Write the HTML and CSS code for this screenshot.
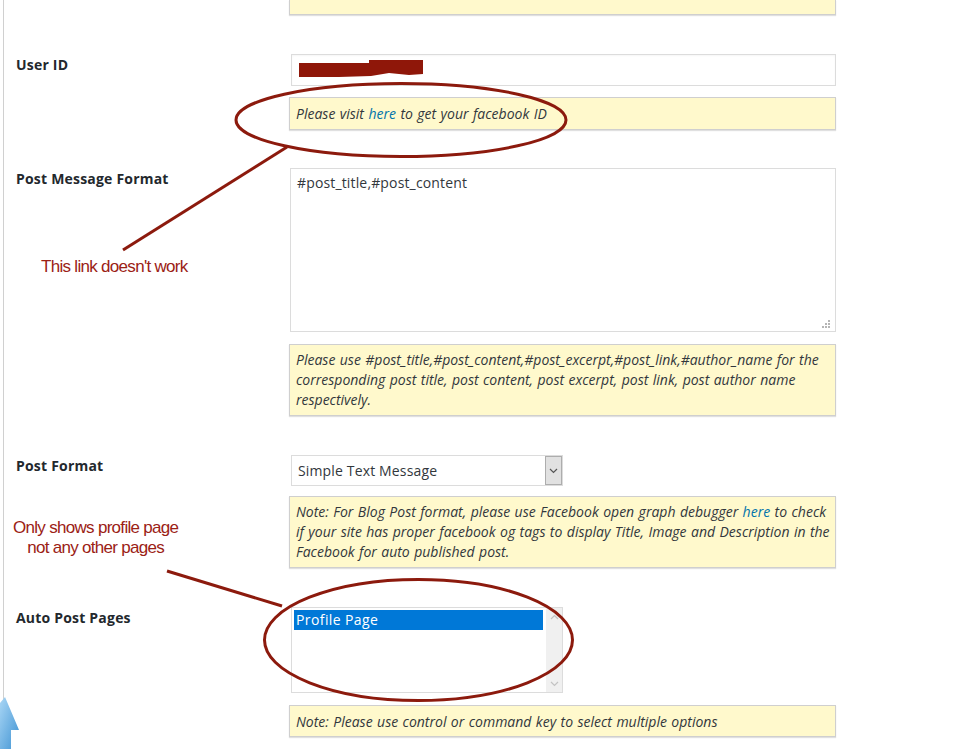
FILE: index.html
```html
<!DOCTYPE html>
<html>
<head>
<meta charset="utf-8">
<title>Facebook settings</title>
<link rel="stylesheet" href="styles.css">
</head>
<body>
<div class="wrap">
  <div class="row first">
    <div class="label"></div>
    <div class="field"><div class="desc top"></div></div>
  </div>

  <div class="row r-user">
    <div class="label">User ID</div>
    <div class="field">
      <div class="input">
        <svg class="redact" width="130" height="20" viewBox="0 0 130 20"><polygon points="0,4 70,4 70,1 124,1 124,15 110,16 90,14 72,17 40,18 0,18" fill="#8f1709"/></svg>
      </div>
      <div class="desc d1">Please visit <a href="#">here</a> to get your facebook ID</div>
    </div>
  </div>

  <div class="row r-msg">
    <div class="label">Post Message Format</div>
    <div class="field">
      <div class="textarea">#post_title,#post_content
        <svg class="grip" width="8" height="8" viewBox="0 0 8 8"><rect x="6" y="0" width="2" height="2" fill="#b5b5b5"/><rect x="3" y="3" width="2" height="2" fill="#b5b5b5"/><rect x="6" y="3" width="2" height="2" fill="#b5b5b5"/><rect x="0" y="6" width="2" height="2" fill="#b5b5b5"/><rect x="3" y="6" width="2" height="2" fill="#b5b5b5"/><rect x="6" y="6" width="2" height="2" fill="#b5b5b5"/></svg>
      </div>
      <div class="desc d3">Please use #post_title,#post_content,#post_excerpt,#post_link,#author_name for the<br>corresponding post title, post content, post excerpt, post link, post author name<br>respectively.</div>
    </div>
  </div>

  <div class="row r-format">
    <div class="label">Post Format</div>
    <div class="field">
      <div class="select">
        <span class="sel-text">Simple Text Message</span>
        <span class="sel-btn"><svg width="9" height="6" viewBox="0 0 9 6"><polyline points="1,1 4.5,4.5 8,1" fill="none" stroke="#555" stroke-width="1.2"/></svg></span>
      </div>
      <div class="desc d3">Note: For Blog Post format, please use Facebook open graph debugger <a href="#">here</a> to check<br>if your site has proper facebook og tags to display Title, Image and Description in the<br>Facebook for auto published post.</div>
    </div>
  </div>

  <div class="row r-pages">
    <div class="label">Auto Post Pages</div>
    <div class="field">
      <div class="multi">
        <div class="options"><div class="opt selected">Profile Page</div></div>
        <div class="scroll">
          <svg width="9" height="6" viewBox="0 0 9 6"><polyline points="1,5 4.5,1.5 8,5" fill="none" stroke="#c3c3c3" stroke-width="1.2"/></svg>
          <svg width="9" height="6" viewBox="0 0 9 6"><polyline points="1,1 4.5,4.5 8,1" fill="none" stroke="#c3c3c3" stroke-width="1.2"/></svg>
        </div>
      </div>
      <div class="desc d1">Note: Please use control or command key to select multiple options</div>
    </div>
  </div>
</div>

<svg class="marks" width="957" height="749" viewBox="0 0 957 749">
  <ellipse cx="401" cy="120" rx="165" ry="36.5" fill="none" stroke="#8c1a0d" stroke-width="3"/>
  <line x1="287" y1="147" x2="123" y2="250" stroke="#8c1a0d" stroke-width="3"/>
  <line x1="167" y1="571" x2="282" y2="606" stroke="#8c1a0d" stroke-width="3"/>
  <ellipse cx="418.5" cy="640" rx="154" ry="60.5" fill="none" stroke="#8c1a0d" stroke-width="3"/>
</svg>
<div class="note n1">This link doesn't work</div>
<div class="note n2">Only shows profile page<br>not any other pages</div>
<svg class="arrow" width="20" height="52" viewBox="0 0 20 52">
  <defs><linearGradient id="ag" x1="0" y1="0" x2="1" y2="1"><stop offset="0" stop-color="#a9d6f5"/><stop offset="1" stop-color="#3f93d3"/></linearGradient></defs>
  <polygon points="0,6 5,0 19,33 11,33 11,52 0,52" fill="url(#ag)"/>
</svg>
</body>
</html>
```
FILE: styles.css
```css
html, body {
  margin: 0;
  padding: 0;
  background: #fff;
}
body {
  width: 957px;
  height: 749px;
  overflow: hidden;
  position: relative;
  font-family: "Open Sans", "Noto Sans", sans-serif;
}
.wrap {
  margin-left: 3px;
  border-left: 1px solid #d0d0d0;
  height: 749px;
  padding-left: 12px;
}
.row {
  display: grid;
  grid-template-columns: 273px 547px;
  align-items: start;
}
.label {
  font-weight: 700;
  font-size: 14px;
  line-height: 20px;
  color: #23282d;
  padding-top: 1px;
  letter-spacing: 0.2px;
}
.desc {
  background: #fff9cc;
  border: 1px solid #cfcfcf;
  box-shadow: 0 1px 1px rgba(0,0,0,0.12);
  padding: 6px 6px 5px 6px;
  font-style: italic;
  font-size: 14px;
  line-height: 20px;
  color: #32373c;
  white-space: nowrap;
  word-spacing: 0.8px;
}
.desc a {
  color: #0073aa;
  text-decoration: none;
}
.desc.top {
  height: 14px;
  padding: 0;
  border-top: none;
}
.desc.d1 {
  height: 20px;
}
.desc.d3 {
  padding: 5px 6px;
  height: 60px;
}
.r-user { margin-top: 39px; }
.r-msg { margin-top: 38px; }
.r-format { margin-top: 39px; }
.r-pages { margin-top: 39px; }

.input {
  margin-left: 2px;
  height: 30px;
  border: 1px solid #dcdcdc;
  background: #fff;
  position: relative;
  box-shadow: inset 0 1px 2px rgba(0,0,0,0.04);
}
.redact {
  position: absolute;
  left: 7px;
  top: 4px;
}
.r-user .desc { margin-top: 11px; }

.textarea {
  margin-left: 1px;
  height: 148px;
  border: 1px solid #dcdcdc;
  padding: 6px 6px 8px 6px;
  font-size: 14px;
  line-height: 16px;
  color: #32373c;
  position: relative;
  letter-spacing: 0.15px;
}
.grip {
  position: absolute;
  right: 5px;
  bottom: 3px;
}
.r-msg .desc { margin-top: 12px; }

.select {
  margin-left: 2px;
  width: 270px;
  height: 29px;
  border: 1px solid #dcdcdc;
  display: flex;
  align-items: center;
  justify-content: space-between;
  background: #fff;
}
.sel-text {
  padding-left: 6px;
  font-size: 14px;
  color: #32373c;
  letter-spacing: 0.15px;
}
.sel-btn {
  width: 15px;
  height: 27px;
  background: #e1e1e1;
  border: 1px solid #adadad;
  display: flex;
  align-items: center;
  justify-content: center;
}
.r-format .desc { margin-top: 10px; }

.multi {
  margin-left: 2px;
  width: 270px;
  height: 84px;
  border: 1px solid #dcdcdc;
  display: flex;
  background: #fff;
}
.options {
  flex: 1;
  padding: 2px 3px 0 2px;
}
.opt {
  font-size: 14px;
  line-height: 20px;
  padding-left: 2px;
  color: #32373c;
  letter-spacing: 0.4px;
}
.opt.selected {
  background: #0078d7;
  color: #fff;
}
.scroll {
  width: 16px;
  background: #f0f0f0;
  display: flex;
  flex-direction: column;
  justify-content: space-between;
  align-items: center;
  padding: 6px 0 5px;
}
.r-pages .desc { margin-top: 12px; height: 19px; }

.marks {
  position: absolute;
  left: 0;
  top: 0;
  pointer-events: none;
}
.note {
  position: absolute;
  font-family: "Liberation Sans", Arial, sans-serif;
  font-size: 17px;
  line-height: 20px;
  letter-spacing: -0.7px;
  color: #9b2115;
  white-space: nowrap;
}
.n1 {
  left: 41px;
  top: 257px;
}
.n2 {
  left: 13px;
  top: 518px;
  text-align: center;
}
.arrow {
  position: absolute;
  left: 0;
  top: 697px;
}
```
